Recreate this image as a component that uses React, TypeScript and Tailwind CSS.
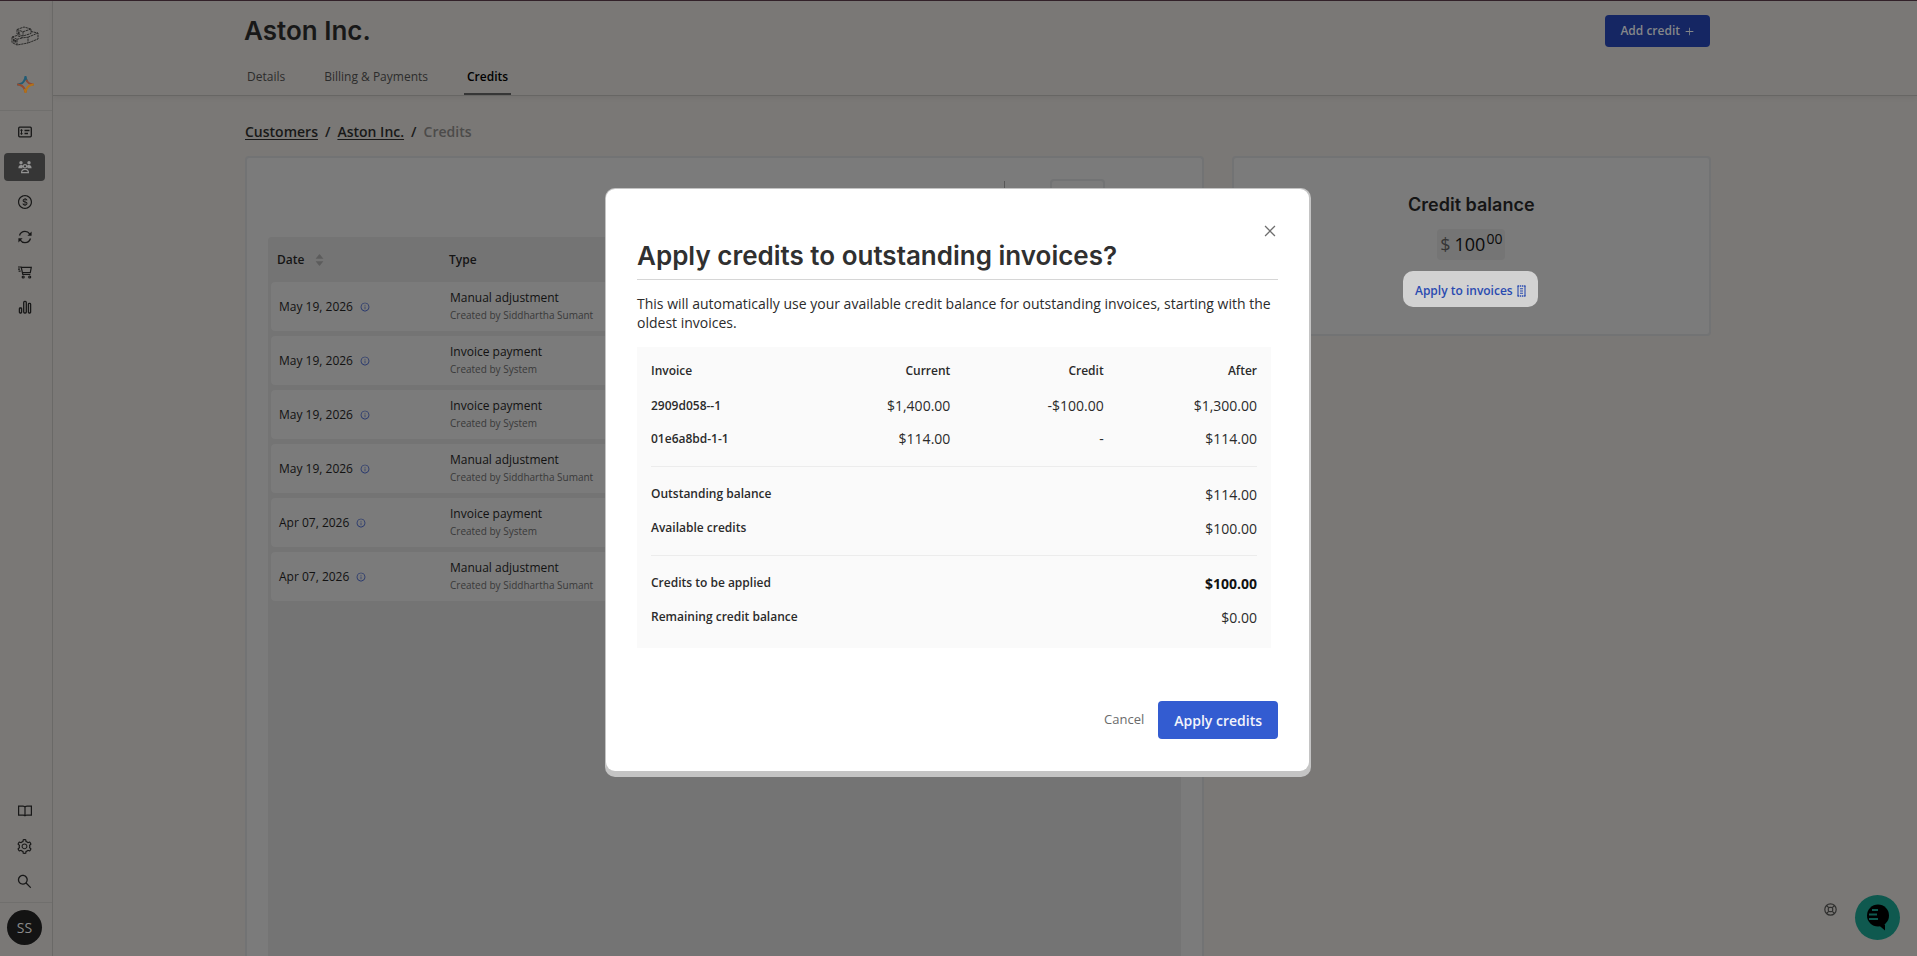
import type { ReactNode } from "react";
import {
  AiOutlineClose,
  AiOutlineInfoCircle,
  AiOutlinePlus,
  AiOutlineSearch,
  AiOutlineSetting,
  AiOutlineDollarCircle,
  AiFillCaretUp,
  AiFillCaretDown,
} from "react-icons/ai";

type Transaction = {
  id: number;
  date: string;
  type: string;
  createdBy: string;
};

type InvoiceLine = {
  invoice: string;
  current: string;
  credit: string;
  after: string;
};

type SummaryLine = {
  label: string;
  value: string;
  strong?: boolean;
};

const transactions: Transaction[] = [
  { id: 1, date: "May 19, 2026", type: "Manual adjustment", createdBy: "Siddhartha Sumant" },
  { id: 2, date: "May 19, 2026", type: "Invoice payment", createdBy: "System" },
  { id: 3, date: "May 19, 2026", type: "Invoice payment", createdBy: "System" },
  { id: 4, date: "May 19, 2026", type: "Manual adjustment", createdBy: "Siddhartha Sumant" },
  { id: 5, date: "Apr 07, 2026", type: "Invoice payment", createdBy: "System" },
  { id: 6, date: "Apr 07, 2026", type: "Manual adjustment", createdBy: "Siddhartha Sumant" },
];

const invoices: InvoiceLine[] = [
  { invoice: "2909d058--1", current: "$1,400.00", credit: "-$100.00", after: "$1,300.00" },
  { invoice: "01e6a8bd-1-1", current: "$114.00", credit: "-", after: "$114.00" },
];

const balances: SummaryLine[] = [
  { label: "Outstanding balance", value: "$114.00" },
  { label: "Available credits", value: "$100.00" },
];

const totals: SummaryLine[] = [
  { label: "Credits to be applied", value: "$100.00", strong: true },
  { label: "Remaining credit balance", value: "$0.00" },
];

function Logo() {
  return (
    <svg width="28" height="20" viewBox="0 0 28 20" fill="none" stroke="#2b2b2a" strokeWidth="1" strokeDasharray="2.4 0.6">
      <path d="M6 3.500 13 1l7 2v4.500L12 10 6 8zM6 3.500l6 2.300V10M12 5.800 20 3" />
      <path d="M1 11l5-1.500 6 2.300 5-.6V17L6 19l-5-2.500zM1 11l5 2.300V19M6 13.300l6-1.500" />
      <path d="M20 5.500l7 1.500v6L17 17M17 11.200 27 7" />
      <path d="M2.800 13v3.200M4.500 14v3M7.800 5.500v2.700" strokeWidth="1.600" />
    </svg>
  );
}

function Sparkle() {
  return (
    <svg width="17" height="17" viewBox="0 0 16 16" fill="none" strokeWidth="1.900" strokeLinecap="round">
      <path d="M1 8c3.200-.6 5-2 5.800-3.700C7.400 3.200 7.800 2.200 8 1" stroke="#215c75" />
      <path d="M8 1c.2 1.200.6 2.200 1.200 3.300" stroke="#215c75" />
      <path d="M9.200 4.300C10 6 11.800 7.400 15 8" stroke="#8f4a35" />
      <path d="M15 8c-3.200.6-5 2-5.800 3.700C8.600 12.800 8.200 13.800 8 15" stroke="#b37218" />
      <path d="M8 15c-.2-1.200-.6-2.200-1.200-3.300C6 10 4.200 8.600 1 8" stroke="#964b2d" />
      <path d="M8 15c-.1-.7-.3-1.400-.6-2" stroke="#b37218" />
    </svg>
  );
}

function PlansIcon() {
  return (
    <svg width="14" height="14" viewBox="0 0 14 14" fill="none" stroke="currentColor" strokeWidth="1.3">
      <rect x="0.700" y="2.200" width="12.600" height="9.600" rx="1" />
      <path d="M6.500 5.500h5M6.500 8.500h3.500M2.500 5.300h2M2.500 8.700h2" />
      <path d="M3.500 4.300v5.400" strokeWidth="1" />
    </svg>
  );
}

function CustomersIcon() {
  return (
    <svg width="14" height="14" viewBox="0 0 14 14" fill="currentColor">
      <circle cx="3" cy="2.800" r="1.700" />
      <circle cx="11" cy="2.800" r="1.700" />
      <path d="M.4 8.300C.4 6 1.500 5 3 5s2 .6 2.200 1.200L4.300 8.300zM13.600 8.300C13.600 6 12.500 5 11 5s-2 .6-2.200 1.200l.9 2.100z" />
      <circle cx="7" cy="6.300" r="1.700" fill="none" stroke="currentColor" strokeWidth="1.100" />
      <path d="M3.600 12.600c0-2.300 1.100-3.200 3.400-3.200s3.400.9 3.400 3.200z" fill="none" stroke="currentColor" strokeWidth="1.200" />
    </svg>
  );
}

function SyncIcon() {
  return (
    <svg width="14" height="14" viewBox="0 0 14 14" fill="none" stroke="currentColor" strokeWidth="1.300">
      <path d="M1.500 5.500C2.300 3 4.400 1.400 7 1.400c2 0 3.700 1 4.700 2.500M12.500 8.500c-.8 2.500-2.900 4.100-5.500 4.100-2 0-3.700-1-4.700-2.500" />
      <path d="M13.600 1.500v4.200H9.400zM.4 12.500V8.300h4.200z" fill="currentColor" stroke="none" />
    </svg>
  );
}

function CartIcon() {
  return (
    <svg width="14" height="14" viewBox="0 0 14 14" fill="none" stroke="currentColor" strokeWidth="1.2">
      <path d="M0 2h3.200l1.600 7.500h7.500M3.600 2.300h9.700l-1 5.300H4.600M0 4.200h2M.6 6.200h2" />
      <circle cx="5.200" cy="12" r="1" />
      <circle cx="11.700" cy="12" r="1" />
    </svg>
  );
}

function BarsIcon() {
  return (
    <svg width="14" height="14" viewBox="0 0 14 14" fill="none" stroke="currentColor" strokeWidth="1.300">
      <rect x="1.400" y="8" width="2.200" height="5" rx="0.800" />
      <rect x="5.700" y="1.400" width="2.600" height="11.600" rx="1" />
      <rect x="10.400" y="3.400" width="2.200" height="9.600" rx="0.800" />
    </svg>
  );
}

function BookIcon() {
  return (
    <svg width="14" height="14" viewBox="0 0 14 14" fill="none" stroke="currentColor" strokeWidth="1.200">
      <path d="M.6 2.200h4.400c1.200 0 2 .4 2 1.200 0-.8.8-1.200 2-1.200h4.400v9H8.600c-.9 0-1.600.3-1.600 1 0-.7-.7-1-1.600-1H.6zM7 3.400v8.800" />
    </svg>
  );
}

function ReceiptIcon() {
  return (
    <svg width="9" height="12" viewBox="0 0 9 12" fill="none" stroke="currentColor" strokeWidth="1.100">
      <path d="M1 1v10M8 1v10M3 3.700h3M3 6h3M3 8.300h3" />
      <path d="M.5 1h8M.5 11h8" strokeDasharray="1.500 0.700" strokeWidth="1.300" />
    </svg>
  );
}

function HelpIcon() {
  return (
    <svg width="13" height="13" viewBox="0 0 13 13" fill="none" stroke="#30302f" strokeWidth="1.200">
      <circle cx="6.500" cy="6.500" r="5.700" />
      <rect x="4.300" y="4.300" width="4.400" height="4.400" rx="1.500" />
      <path d="M2.500 2.500l2.200 2.200M10.500 2.500 8.300 4.700M2.500 10.500l2.200-2.200M10.500 10.500 8.300 8.300" />
    </svg>
  );
}

function ChatIcon() {
  return (
    <svg width="24" height="27" viewBox="0 0 24 27">
      <circle cx="12" cy="11.500" r="11" fill="#000" />
      <path d="M12 20.500h7V26.500z" fill="#000" />
      <path d="M6 6h6M3 10.500h8M3 15h9" stroke="#0f594f" strokeWidth="1.800" />
    </svg>
  );
}

function NavItem({ label, active, children }: { label: string; active?: boolean; children: ReactNode }) {
  return (
    <a
      href="#"
      aria-label={label}
      className={`flex h-7 w-[41px] items-center justify-center rounded ${active ? "bg-[#363636] text-[#929292]" : "text-[#181818]"}`}
    >
      {children}
    </a>
  );
}

function Sidebar() {
  return (
    <aside className="sticky top-0 flex h-[calc(100vh-1px)] w-[53px] shrink-0 flex-col border-r border-[#6a6967] pt-[25px] pb-[11px]">
      <a href="#" aria-label="Home" className="flex h-5 justify-center pr-[2px]">
        <Logo />
      </a>
      <a href="#" aria-label="Assistant" className="mt-7 flex h-5 items-center justify-center pr-[2px]">
        <Sparkle />
      </a>
      <nav className="mt-4 flex flex-col gap-[7px] border-t border-[#706f6d] pt-[7px] pl-1">
        <NavItem label="Plans"><PlansIcon /></NavItem>
        <NavItem label="Customers" active><CustomersIcon /></NavItem>
        <NavItem label="Payments"><AiOutlineDollarCircle size={16} /></NavItem>
        <NavItem label="Subscriptions"><SyncIcon /></NavItem>
        <NavItem label="Orders"><CartIcon /></NavItem>
        <NavItem label="Reports"><BarsIcon /></NavItem>
      </nav>
      <nav className="mt-auto flex flex-col gap-[7px] border-b border-[#706f6d] pb-[7px] pl-1">
        <NavItem label="Docs"><BookIcon /></NavItem>
        <NavItem label="Settings"><AiOutlineSetting size={17} /></NavItem>
        <NavItem label="Search"><AiOutlineSearch size={17} /></NavItem>
      </nav>
      <button className="mt-[7px] ml-[7px] flex size-[35px] items-center justify-center rounded-full bg-[#131313] text-sm text-[#8b8b8b]">
        SS
      </button>
    </aside>
  );
}

function Header() {
  return (
    <header className="border-b border-[#676664] pr-4 shadow-[0_2px_5px_rgba(0,0,0,0.05)]">
      <div className="mx-auto max-w-[1466px]">
        <div className="flex items-center justify-between pt-[14px]">
          <h1 className="font-['Inter',sans-serif] text-[26px] leading-8 font-semibold text-[#181818]">Aston Inc.</h1>
          <button className="flex h-8 items-center gap-1 rounded bg-[#152663] px-[15px] text-[12px] font-semibold text-[#858789]">
            Add credit <AiOutlinePlus size={11} />
          </button>
        </div>
        <nav className="flex h-12 items-end gap-[33px] text-[12px] leading-5 text-[#2c2c2c]">
          <a href="#" className="border-b-2 border-transparent px-[3px] pb-[6px]">Details</a>
          <a href="#" className="border-b-2 border-transparent px-[3px] pb-[6px]">Billing &amp; Payments</a>
          <a href="#" className="border-b-2 border-[#363636] px-[3px] pb-[6px] font-semibold text-black">Credits</a>
        </nav>
      </div>
    </header>
  );
}

function Transactions() {
  return (
    <section className="flex flex-col rounded-t border-2 border-b-0 border-[#727374] bg-[#7b7b7b] px-[21px]">
      <div className="flex h-[79px] items-start justify-end pt-[21px] pr-[76px]">
        <span className="mt-[2px] mr-[45px] h-8 w-px bg-[#575757]" />
        <button aria-label="Filter" className="h-9 w-[55px] rounded border-2 border-[#727374]" />
      </div>
      <div className="flex-1 rounded-t bg-[#747474] px-[3px]">
        <table className="w-full table-fixed border-separate border-spacing-x-0 border-spacing-y-[5px] text-left">
          <thead>
            <tr className="h-[35px] text-[12px] text-[#151515]">
              <th className="w-[171px] pl-[6px] font-semibold">
                <span className="flex items-center gap-[10px]">
                  Date
                  <span className="flex flex-col text-[#5c5c5c]">
                    <AiFillCaretUp size={11} className="-mb-1" />
                    <AiFillCaretDown size={11} />
                  </span>
                </span>
              </th>
              <th className="pl-[7px] font-semibold">Type</th>
            </tr>
          </thead>
          <tbody>
            {transactions.map((item: Transaction) => (
              <tr key={item.id} className="h-[49px] bg-[#7b7b7b]">
                <td className="rounded-l pl-2">
                  <span className="flex items-center gap-[7px] text-[12px] leading-5 text-[#121212]">
                    {item.date}
                    <AiOutlineInfoCircle size={10} className="text-[#1a2d6c]" />
                  </span>
                </td>
                <td className="rounded-r pb-px pl-2">
                  <p className="text-[12px] leading-[18px] text-[#121212]">{item.type}</p>
                  <p className="text-[10px] leading-4 text-[#393939]">Created by {item.createdBy}</p>
                </td>
              </tr>
            ))}
          </tbody>
        </table>
      </div>
    </section>
  );
}

function CreditBalance() {
  return (
    <section className="flex flex-col items-center self-start rounded border-2 border-[#727374] bg-[#7b7b7b] pt-[35px] pb-[27px]">
      <h2 className="font-['Inter',sans-serif] text-[18px] leading-6 font-semibold text-[#151515]">Credit balance</h2>
      <p className="mt-3 flex h-[31px] items-center gap-1 rounded bg-[#757575] px-[3px] text-[18px] text-[#0a0a0a]">
        <span className="text-[#363636]">$</span>
        <span>
          100<sup className="ml-px text-[14px]">00</sup>
        </span>
      </p>
      <button className="mt-[11px] mr-[2px] flex h-9 items-center gap-1 rounded-[10px] bg-[#d2d2d2] px-3 pt-[3px] text-[12px] font-semibold text-[#2a4bb0]">
        Apply to invoices <ReceiptIcon />
      </button>
    </section>
  );
}

function SummaryRows({ lines }: { lines: SummaryLine[] }) {
  return (
    <dl className="border-t border-[#ececec] py-[10px]">
      {lines.map((line: SummaryLine) => (
        <div key={line.label} className="flex h-[34px] items-center justify-between">
          <dt className="text-[12px] font-semibold">{line.label}</dt>
          <dd className={line.strong ? "text-[14px] font-bold text-[#111111]" : "text-[14px]"}>{line.value}</dd>
        </div>
      ))}
    </dl>
  );
}

function ApplyCreditsDialog() {
  return (
    <div className="fixed inset-0 flex items-start justify-center pt-[188px] pr-px">
      <div className="w-[706px] rounded-[10px] bg-[#c4c4c4] pt-px pr-[2px] pb-[6px] pl-px">
        <div role="dialog" aria-labelledby="apply-title" className="rounded-[9px] bg-white px-[31px] pt-[34px] pb-8 text-[#2b2b2b]">
          <div className="flex justify-end">
            <button aria-label="Close" className="flex size-4 items-center justify-center text-[#6f6f6f]">
              <AiOutlineClose size={16} />
            </button>
          </div>
          <h2 id="apply-title" className="border-b border-[#d6d6d6] pt-px pb-[7px] font-['Inter',sans-serif] text-[26px] leading-8 font-semibold text-[#303030]">
            Apply credits to outstanding invoices?
          </h2>
          <p className="mt-[14px] text-[14px] leading-[19px]">
            This will automatically use your available credit balance for outstanding invoices, starting with the oldest invoices.
          </p>
          <div className="mt-[15px] mr-[7px] bg-[#fafafa] px-[14px] pt-[6px] pb-1">
            <table className="mb-[11px] w-full table-fixed text-right">
              <thead>
                <tr className="h-9 text-[12px]">
                  <th className="w-[146px] text-left font-semibold">Invoice</th>
                  <th className="font-semibold">Current</th>
                  <th className="font-semibold">Credit</th>
                  <th className="font-semibold">After</th>
                </tr>
              </thead>
              <tbody>
                {invoices.map((line: InvoiceLine) => (
                  <tr key={line.invoice} className="h-[33px] text-[14px]">
                    <th className="text-left text-[12px] font-semibold">{line.invoice}</th>
                    <td>{line.current}</td>
                    <td>{line.credit}</td>
                    <td>{line.after}</td>
                  </tr>
                ))}
              </tbody>
            </table>
            <SummaryRows lines={balances} />
            <SummaryRows lines={totals} />
          </div>
          <div className="mt-[53px] flex items-center justify-end gap-[14px]">
            <button className="text-[13px] text-[#6b6b6b]">Cancel</button>
            <button className="h-[38px] rounded bg-[#335cd1] px-4 text-[14px] font-semibold text-[#f2f4fb]">Apply credits</button>
          </div>
        </div>
      </div>
    </div>
  );
}

export default function App() {
  return (
    <div className="flex min-h-screen flex-col border-t border-[#33222a] bg-[#7a7876] font-['Open_Sans',sans-serif] text-[#181818] antialiased">
      <div className="flex flex-1">
        <Sidebar />
        <main className="flex flex-1 flex-col">
          <Header />
          <div className="flex flex-1 flex-col pr-[14px]">
            <div className="mx-auto flex w-full max-w-[1466px] flex-1 flex-col pt-[26px]">
              <nav className="mb-[14px] flex gap-[7px] text-[14px] leading-5 font-semibold">
                <a href="#" className="underline underline-offset-2">Customers</a>
                <span>/</span>
                <a href="#" className="underline underline-offset-2">Aston Inc.</a>
                <span>/</span>
                <span className="text-[#4c4b4a]">Credits</span>
              </nav>
              <div className="grid flex-1 grid-cols-[2fr_1fr] gap-x-7">
                <Transactions />
                <CreditBalance />
              </div>
            </div>
          </div>
        </main>
      </div>
      <ApplyCreditsDialog />
      <div className="fixed right-[17px] bottom-4 flex items-center gap-[18px]">
        <button aria-label="Help" className="mb-4">
          <HelpIcon />
        </button>
        <button aria-label="Open chat" className="flex size-[45px] items-center justify-center rounded-full bg-[#0f594f]">
          <ChatIcon />
        </button>
      </div>
    </div>
  );
}
